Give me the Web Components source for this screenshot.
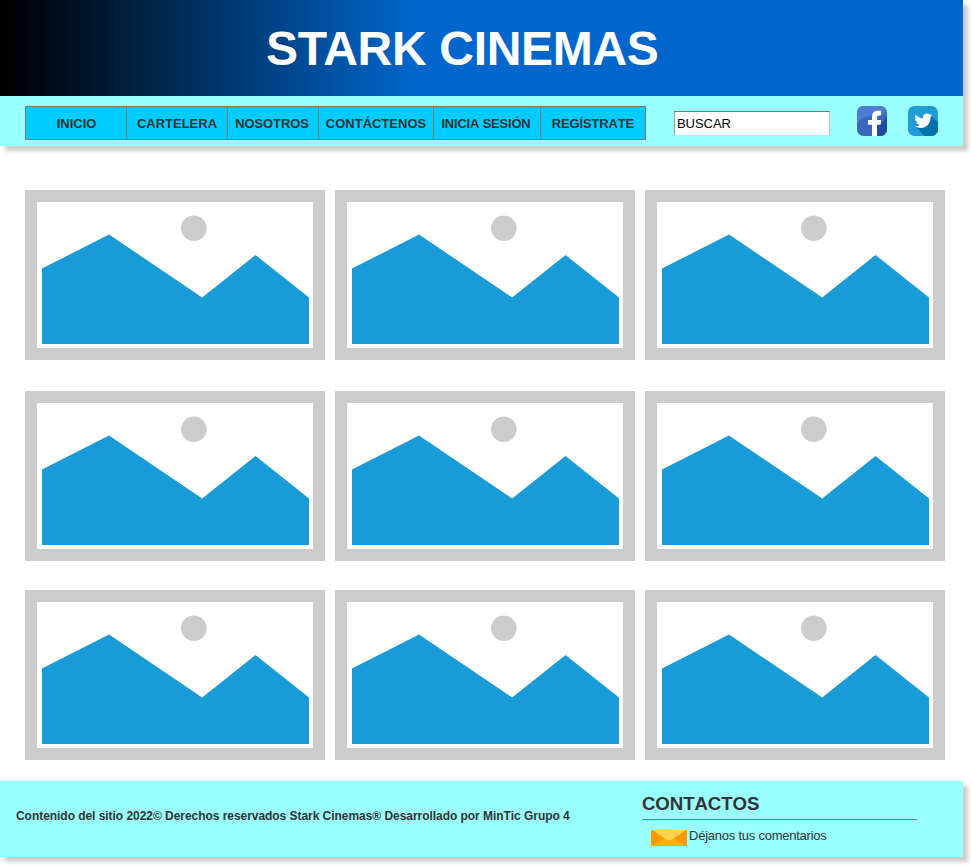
<!DOCTYPE html>
<html lang="es">
<head>
<meta charset="utf-8">
<title>Stark Cinemas</title>
<style>
body{margin:0;background:#fff;color:#333;font-family:"Liberation Sans",Arial,sans-serif;font-size:13px;overflow:hidden}
</style>
</head>
<body>
<stark-page></stark-page>
<script>
const define = (name, html) => {
  const t = document.createElement('template');
  t.innerHTML = html;
  customElements.define(name, class extends HTMLElement {
    constructor() {
      super();
      this.attachShadow({mode: 'open'}).append(t.content.cloneNode(true));
    }
  });
};

define('nav-item', `
<style>
:host{display:flex;align-items:center;justify-content:center;box-sizing:border-box;height:34px;background:#0cf;border:1px solid #797979;border-left-width:0;font-weight:700;white-space:nowrap;line-height:15px;font-kerning:none;padding-top:1px}
</style><slot></slot>`);

define('main-nav', `
<style>
:host{display:flex;box-sizing:border-box;width:621px;border-left:1px solid #797979}
.a{width:101px;padding-left:1px}.b{width:101px}.c{width:91px;letter-spacing:-.1px;padding-right:2px}.d{width:115px}.e{width:107px;letter-spacing:-.2px;padding-right:2px}.f{width:105px;letter-spacing:-.15px}
</style>
<nav-item class="a">INICIO</nav-item><nav-item class="b">CARTELERA</nav-item><nav-item class="c">NOSOTROS</nav-item><nav-item class="d">CONTÁCTENOS</nav-item><nav-item class="e">INICIA SESIÓN</nav-item><nav-item class="f">REGÍSTRATE</nav-item>`);

define('search-box', `
<style>
:host{display:block;width:156px;height:25px}
input{display:block;box-sizing:border-box;width:156px;height:24px;margin:1px 0 0;padding:0 2px 1px;border:1px solid #bbb;border-top:1px solid #767676;border-left-color:#999;border-bottom:0;border-radius:0;background:#fff;color:#000;font:13px "Liberation Sans",Arial,sans-serif;letter-spacing:-.05px;outline:0}
</style><input type="text" value="BUSCAR" aria-label="Buscar">`);

define('facebook-icon', `
<style>:host{display:block;width:30px;height:30px}svg{display:block}</style>
<svg width="30" height="30" viewBox="0 0 30 30"><defs><clipPath id="c"><rect width="30" height="30" rx="6.5"/></clipPath></defs>
<g clip-path="url(#c)"><path fill="#3b66bd" d="M0 0h30v30H0z"/><path fill="#4e7cd0" d="M0 0h30v4C27 10 21 10 14 10 7 10 2 13 0 18z"/><path fill="#204a9e" d="M30 10v20H15V21C22 20 27 16 30 10z"/>
<path fill="#fff" d="M15 30V18.700h-4V14h4v-3c0-4.200 2-6.200 5.500-6.200H24V9.500h-2c-1.700 0-2 .8-2 2V14h4.200l-.6 4.700H20V30z"/></g></svg>`);

define('twitter-icon', `
<style>:host{display:block;width:30px;height:30px}svg{display:block}</style>
<svg width="30" height="30" viewBox="0 0 30 30"><defs><clipPath id="c"><rect width="30" height="30" rx="6.5"/></clipPath></defs>
<g clip-path="url(#c)"><path fill="#219bd8" d="M0 0h30v30H0z"/><path fill="#0073ab" d="M22 9l8 7V30H16.500L7.500 20.500z"/>
<path fill="#fff" d="M7.400 8.500c2 2.400 4.700 3.800 7.800 4-.8-3.200 1.300-5 3.600-5 1.200 0 2 .4 2.800 1.100l2-.7-1.100 1.800 1.400-.2-1.400 1.800c.2 6.200-4.200 10.700-9.700 10.700-2.200 0-4.300-.6-6-1.700 2 .1 3.700-.4 5-1.500-1.800-.1-2.900-1.100-3.400-2.500h1.500c-1.900-.6-2.900-1.900-2.900-3.700l1.500.5C7.200 12 6.700 10.200 7.400 8.500z"/></g></svg>`);

define('page-header', `
<style>
:host{display:block;width:963px;box-shadow:5px 5px 4px rgba(0,0,0,.2)}
h1{margin:0;height:96px;box-sizing:border-box;padding-left:266px;background:linear-gradient(90deg,#000 4px,#06c 415px);color:#fff;font-size:48px;font-weight:700;letter-spacing:-.3px;line-height:98px;white-space:nowrap}
.bar{display:flex;align-items:flex-start;height:50px;background:#9ff;padding:10px 0 0 25px;box-sizing:border-box}
main-nav{margin-right:28px}
search-box{padding-top:4px}
facebook-icon{margin:0 21px 0 27px}
</style>
<h1>STARK CINEMAS</h1>
<div class="bar"><main-nav></main-nav><search-box></search-box><facebook-icon></facebook-icon><twitter-icon></twitter-icon></div>`);

define('movie-card', `
<style>:host{display:block;box-sizing:border-box;width:300px;height:170px;border:12px solid #ccc;background:#fff}svg{display:block}</style>
<svg width="276" height="146" viewBox="12 12 276 146"><circle cx="168.800" cy="38.300" r="12.800" fill="#ccc"/><path fill="#189bd7" d="M17 78.600 84 44.500l93.200 63 53.300-42.500 53.500 42.500V154H17z"/></svg>`);

define('movie-grid', `
<style>:host{display:grid;grid-template-columns:repeat(3,300px);grid-template-rows:201px 199px 170px;column-gap:10px;padding:44px 0 21px 25px}</style>
${'<movie-card></movie-card>'.repeat(9)}`);

define('contact-panel', `
<style>
:host{display:block;width:275px}
h2{margin:0;font-size:18.670px;line-height:21px;height:26px;border-bottom:1px solid #797979;font-weight:700;letter-spacing:-.1px;font-kerning:none}
.row{display:flex;padding:8px 0 0 9px;gap:2px;line-height:15px}
svg{display:block;margin-top:2px}
span{letter-spacing:-.24px}
</style>
<h2>CONTACTOS</h2>
<div class="row"><svg width="36" height="16" viewBox="0 0 36 16"><rect width="36" height="16" rx="1" fill="#ff9800"/><path fill="#ffb300" d="M1 16 14 8h8l13 8z"/><path fill="#ffd34d" d="M1 0h34L21 9.500q-3 1.500-6 0z"/></svg><span>Déjanos tus comentarios</span></div>`);

define('page-footer', `
<style>
:host{display:flex;box-sizing:border-box;width:963px;height:76px;background:#9ff;box-shadow:5px 5px 4px rgba(0,0,0,.2);padding-left:16px}
p{margin:0;width:626px;padding-top:28px;font-size:12px;line-height:14px;font-weight:700;letter-spacing:-.045px;white-space:nowrap;font-kerning:none}
contact-panel{padding-top:12px}
</style>
<p>Contenido del sitio 2022© Derechos reservados Stark Cinemas® Desarrollado por MinTic Grupo 4</p>
<contact-panel></contact-panel>`);

define('stark-page', `
<style>:host{display:block;height:867px}</style>
<page-header></page-header><movie-grid></movie-grid><page-footer></page-footer>`);
</script>
</body>
</html>
